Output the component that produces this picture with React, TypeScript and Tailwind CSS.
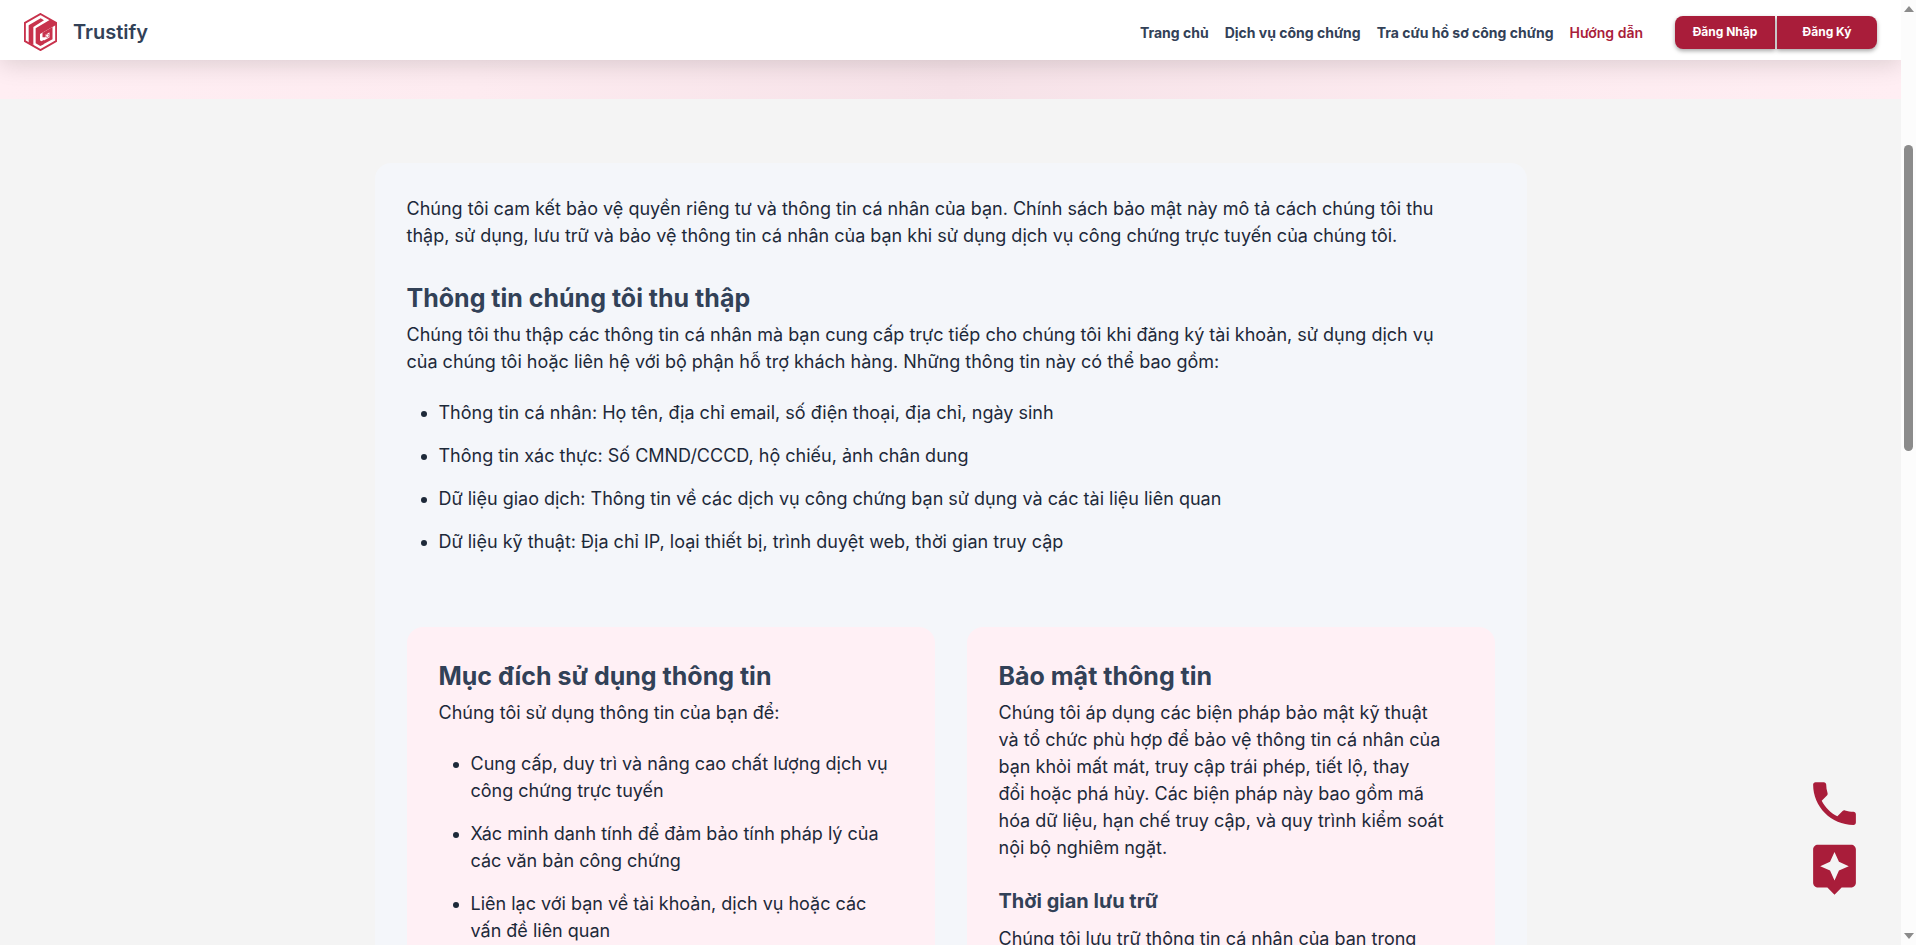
import { MdPhone, MdAssistant } from 'react-icons/md';

const NAV = [
  { label: 'Trang chủ', active: false },
  { label: 'Dịch vụ công chứng', active: false },
  { label: 'Tra cứu hồ sơ công chứng', active: false },
  { label: 'Hướng dẫn', active: true },
];

const COLLECTED = [
  'Thông tin cá nhân: Họ tên, địa chỉ email, số điện thoại, địa chỉ, ngày sinh',
  'Thông tin xác thực: Số CMND/CCCD, hộ chiếu, ảnh chân dung',
  'Dữ liệu giao dịch: Thông tin về các dịch vụ công chứng bạn sử dụng và các tài liệu liên quan',
  'Dữ liệu kỹ thuật: Địa chỉ IP, loại thiết bị, trình duyệt web, thời gian truy cập',
];

const PURPOSES = [
  'Cung cấp, duy trì và nâng cao chất lượng dịch vụ\ncông chứng trực tuyến',
  'Xác minh danh tính để đảm bảo tính pháp lý của\ncác văn bản công chứng',
  'Liên lạc với bạn về tài khoản, dịch vụ hoặc các\nvấn đề liên quan',
];

function Logo() {
  return (
    <svg viewBox="0 0 99 114" className="h-[38px] w-[33px]" aria-hidden="true">
      <path d="M49.5 3 96.5 30V84L49.5 111 2.5 84V30Z" fill="none" stroke="#c8324c" strokeWidth="6" />
      <path d="M14 37 50 16 60 22 28 42V97L14 89Z" fill="#c8324c" />
      <path d="M35 46 78 20 96 30V36L48 63V82L52 85 60 81V93L49 99 35 91Z" fill="#c8324c" />
      <path d="M50 93 81 76V50L60 62V73" fill="none" stroke="#c8324c" strokeWidth="9" />
      <circle cx="70" cy="68" r="5" fill="#fff" stroke="#c8324c" strokeWidth="2" />
    </svg>
  );
}

function Header() {
  return (
    <header className="relative z-10 flex h-[60px] shrink-0 items-center justify-between bg-white px-6 shadow-[0_4px_24px_rgba(0,0,0,0.14)]">
      <a href="#" className="flex items-center gap-4 pt-1">
        <Logo />
        <span className="text-xl font-semibold text-[#324157]">Trustify</span>
      </a>
      <div className="flex items-center gap-8 pt-1">
        <nav className="flex gap-4 pt-0.5 text-sm">
          {NAV.map((item) => (
            <a key={item.label} href="#" className={item.active ? 'font-semibold text-[#a91d3a]' : 'font-bold text-[#324157]'}>
              {item.label}
            </a>
          ))}
        </nav>
        <div className="flex gap-0.5 text-xs font-bold text-white">
          <button className="h-[33px] w-[100px] rounded-l-lg bg-[#a91d3a] shadow-[0_2px_4px_rgba(0,0,0,0.35)]">Đăng Nhập</button>
          <button className="h-[33px] w-[100px] rounded-r-lg bg-[#a91d3a] shadow-[0_2px_4px_rgba(0,0,0,0.35)]">Đăng Ký</button>
        </div>
      </div>
    </header>
  );
}

function SectionTitle({ children }: { children: string }) {
  return <h2 className="mb-1.5 text-[25px] leading-[34px] font-bold text-[#324157]">{children}</h2>;
}

function BulletList({ items }: { items: string[] }) {
  return (
    <ul className="mt-6 list-disc space-y-4 pl-8">
      {items.map((item) => (
        <li key={item}>{item}</li>
      ))}
    </ul>
  );
}

export default function App() {
  return (
    <div className="flex h-screen overflow-hidden bg-[#f4f4f4] font-[Inter,sans-serif]">
      <div className="relative flex min-w-0 flex-1 flex-col">
        <Header />
        <div className="h-[39px] shrink-0 bg-[linear-gradient(90deg,#ffeef3_0%,#fdebf0_25%,#f6e2e8_50%,#fdebf0_80%,#ffeef3_100%)]" />
        <main className="px-8 pt-16">
          <article className="mx-auto max-w-6xl rounded-2xl bg-[#f4f6fa] p-8 text-[18px] leading-[27px] whitespace-pre-line text-[#1d2939]">
            <p>
              {'Chúng tôi cam kết bảo vệ quyền riêng tư và thông tin cá nhân của bạn. Chính sách bảo mật này mô tả cách chúng tôi thu\nthập, sử dụng, lưu trữ và bảo vệ thông tin cá nhân của bạn khi sử dụng dịch vụ công chứng trực tuyến của chúng tôi.'}
            </p>
            <section className="mt-8">
              <SectionTitle>Thông tin chúng tôi thu thập</SectionTitle>
              <p>
                {'Chúng tôi thu thập các thông tin cá nhân mà bạn cung cấp trực tiếp cho chúng tôi khi đăng ký tài khoản, sử dụng dịch vụ\ncủa chúng tôi hoặc liên hệ với bộ phận hỗ trợ khách hàng. Những thông tin này có thể bao gồm:'}
              </p>
              <BulletList items={COLLECTED} />
            </section>
            <div className="mt-[72px] grid grid-cols-2 gap-8">
              <section className="rounded-2xl bg-[#fff0f5] p-8">
                <SectionTitle>Mục đích sử dụng thông tin</SectionTitle>
                <p>Chúng tôi sử dụng thông tin của bạn để:</p>
                <BulletList items={PURPOSES} />
              </section>
              <section className="rounded-2xl bg-[#fff0f5] p-8">
                <SectionTitle>Bảo mật thông tin</SectionTitle>
                <p>
                  {'Chúng tôi áp dụng các biện pháp bảo mật kỹ thuật\nvà tổ chức phù hợp để bảo vệ thông tin cá nhân của\nbạn khỏi mất mát, truy cập trái phép, tiết lộ, thay\nđổi hoặc phá hủy. Các biện pháp này bao gồm mã\nhóa dữ liệu, hạn chế truy cập, và quy trình kiểm soát\nnội bộ nghiêm ngặt.'}
                </p>
                <h3 className="mt-6 mb-2 text-xl leading-8 font-bold text-[#324157]">Thời gian lưu trữ</h3>
                <p>Chúng tôi lưu trữ thông tin cá nhân của bạn trong</p>
              </section>
            </div>
          </article>
        </main>
        <div className="absolute right-[38px] bottom-12 z-20 flex flex-col gap-2 text-[#a91d3a]">
          <a href="#" aria-label="Gọi điện">
            <MdPhone size={57} />
          </a>
          <a href="#" aria-label="Trợ lý">
            <MdAssistant size={57} />
          </a>
        </div>
      </div>
      <div className="z-20 flex w-[15px] shrink-0 flex-col items-center justify-between bg-[#fcfcfc] py-1" aria-hidden="true">
        <svg viewBox="0 0 10 6" className="mt-0.5 h-1.5 w-2.5"><path d="M5 0 10 6H0Z" fill="#8b8b8b" /></svg>
        <div className="mt-[133px] h-[306px] w-[9px] rounded-full bg-[#8b8b8b]" />
        <div className="flex-1" />
        <svg viewBox="0 0 10 6" className="mb-0.5 h-1.5 w-2.5"><path d="M0 0H10L5 6Z" fill="#8b8b8b" /></svg>
      </div>
    </div>
  );
}
